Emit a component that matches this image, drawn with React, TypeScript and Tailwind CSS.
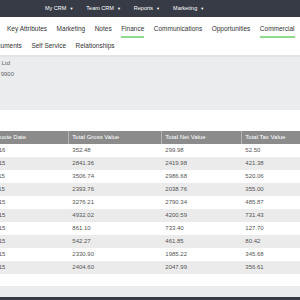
import React from "react";

const navItems = ["My CRM", "Team CRM", "Reports", "Marketing"];
const tabs1 = [
  { label: "Key Attributes" },
  { label: "Marketing" },
  { label: "Notes" },
  { label: "Finance", active: true },
  { label: "Communications" },
  { label: "Opportunities" },
  { label: "Commercial", active: true },
];
const tabs2 = ["Documents", "Self Service", "Relationships"];

const rows = [
  ["14/01/2016", "352.48", "299.98", "52.50"],
  ["09/12/2015", "2841.36", "2419.98", "421.38"],
  ["27/11/2015", "3506.74", "2986.68", "520.06"],
  ["13/11/2015", "2393.76", "2038.76", "355.00"],
  ["30/10/2015", "3276.21", "2790.34", "485.87"],
  ["16/10/2015", "4932.02", "4200.59", "731.43"],
  ["02/10/2015", "861.10", "733.40", "127.70"],
  ["18/09/2015", "542.27", "461.85", "80.42"],
  ["04/09/2015", "2330.90", "1985.22", "345.68"],
  ["21/08/2015", "2404.60", "2047.99", "356.61"],
];

export default function App() {
  return (
    <div
      className="w-[300px] h-[300px] overflow-hidden bg-white flex flex-col"
      style={{ fontFamily: '"Liberation Sans", Arial, sans-serif' }}
    >
      {/* top nav */}
      <div className="h-[17px] shrink-0 bg-[#363b46] flex items-center pl-[45px] gap-[13px] text-white text-[5.5px]">
        {navItems.map((n) => (
          <div key={n} className="flex items-center gap-[3px] whitespace-nowrap">
            <span>{n}</span>
            <span className="text-[4px]">▼</span>
          </div>
        ))}
      </div>

      {/* tabs */}
      <div className="h-[40px] shrink-0 bg-white border-b-2 border-[#e3e4e6] text-[6.5px] text-[#333]">
        <div className="h-[21px] flex items-end pl-[7px] gap-[9.5px] whitespace-nowrap">
          {tabs1.map((t) => (
            <div key={t.label} className="flex flex-col items-stretch">
              <span className="leading-[8px]">{t.label}</span>
              <div className={`mt-[3px] h-[2px] ${t.active ? "bg-[#8edb8e]" : "bg-transparent"}`} />
            </div>
          ))}
        </div>
        <div className="h-[15px] flex items-center ml-[-11px] gap-[9.5px] whitespace-nowrap">
          {tabs2.map((t) => (
            <span key={t}>{t}</span>
          ))}
        </div>
      </div>

      {/* details panel */}
      <div className="h-[53px] shrink-0 bg-[#ebecee] text-[6px] text-[#666] pt-[1px]">
        <div className="w-[70px] ml-[-60px] text-right leading-[10px] whitespace-nowrap">Example Trading Ltd</div>
        <div className="w-[74px] ml-[-60px] text-right leading-[12px] whitespace-nowrap">0161 496 9900</div>
      </div>

      <div className="h-[21px] shrink-0 bg-white" />

      {/* table */}
      <div className="ml-[-8px] text-[6px]">
        <div className="grid grid-cols-[77px_93px_80px_80px] h-[13px] bg-[#8b8b8b] text-white">
          <div className="flex items-center pl-[3.3px] border-r border-[#b4b4b4] whitespace-nowrap">Quote Date</div>
          <div className="flex items-center pl-[3.3px] border-r border-[#b4b4b4]">Total Gross Value</div>
          <div className="flex items-center pl-[3.3px] border-r border-[#b4b4b4]">Total Net Value</div>
          <div className="flex items-center pl-[3.3px]">Total Tax Value</div>
        </div>
        {rows.map((r, i) => (
          <div
            key={i}
            className={`grid grid-cols-[77px_93px_80px_80px] h-[13px] text-[#555] ${i % 2 === 1 ? "bg-[#ebebeb]" : "bg-white"}`}
          >
            <div className="flex items-center pl-[3.3px] overflow-hidden whitespace-nowrap">
              <span className="ml-[-20px]">{r[0]}</span>
            </div>
            <div className="flex items-center pl-[3.3px]">{r[1]}</div>
            <div className="flex items-center pl-[3.3px]">{r[2]}</div>
            <div className="flex items-center pl-[3.3px]">{r[3]}</div>
          </div>
        ))}
      </div>

      <div className="h-[12px] shrink-0 bg-white" />
      <div className="h-[11px] shrink-0 bg-[#ebecee]" />
      <div className="h-[3px] shrink-0 bg-[#363b46]" />
    </div>
  );
}
